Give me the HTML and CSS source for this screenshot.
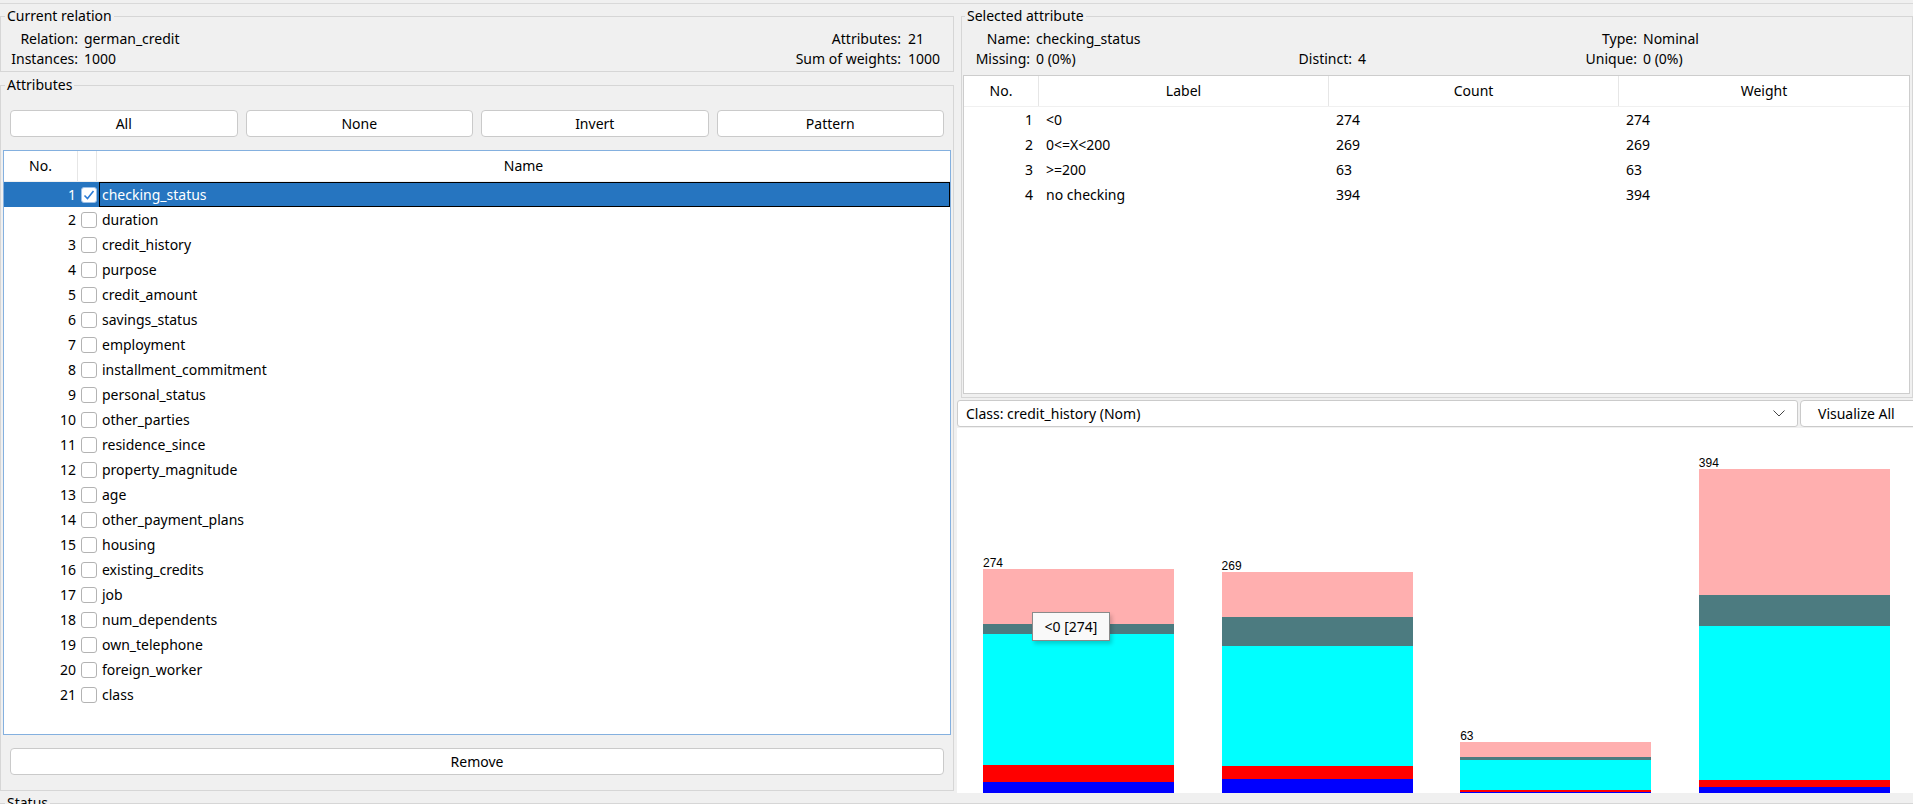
FILE: index.html
```html
<!DOCTYPE html>
<html>
<head>
<meta charset="utf-8">
<title>Weka Preprocess</title>
<link rel="stylesheet" href="styles.css">
</head>
<body>
<div class="app">
  <div class="tabpane">
    <div class="left">
      <fieldset class="group rel">
        <legend>Current relation</legend>
        <div class="relrow">
          <div class="kv kv-left">
            <span class="k">Relation:</span><span class="v">german_credit</span>
            <span class="k">Instances:</span><span class="v">1000</span>
          </div>
          <div class="kv kv-right">
            <span class="k">Attributes:</span><span class="v">21</span>
            <span class="k">Sum of weights:</span><span class="v">1000</span>
          </div>
        </div>
      </fieldset>

      <fieldset class="group attrs">
        <legend>Attributes</legend>
        <div class="btnrow">
          <button class="btn">All</button>
          <button class="btn">None</button>
          <button class="btn">Invert</button>
          <button class="btn">Pattern</button>
        </div>
        <div class="attrtable">
          <div class="ahead">
            <div class="ah">No.</div>
            <div class="ah"></div>
            <div class="ah last">Name</div>
          </div>
          <div class="arow sel">
            <div class="ano">1</div>
            <div class="acb"><span class="chk on"><svg width="14" height="14" viewBox="0 0 14 14"><polyline points="2.5,7.5 5.5,10.5 11.5,3" fill="none" stroke="#2b7bd6" stroke-width="1.6"/></svg></span></div>
            <div class="aname">checking_status</div>
          </div>
          <div class="arow"><div class="ano">2</div><div class="acb"><span class="chk"></span></div><div class="aname">duration</div></div>
          <div class="arow"><div class="ano">3</div><div class="acb"><span class="chk"></span></div><div class="aname">credit_history</div></div>
          <div class="arow"><div class="ano">4</div><div class="acb"><span class="chk"></span></div><div class="aname">purpose</div></div>
          <div class="arow"><div class="ano">5</div><div class="acb"><span class="chk"></span></div><div class="aname">credit_amount</div></div>
          <div class="arow"><div class="ano">6</div><div class="acb"><span class="chk"></span></div><div class="aname">savings_status</div></div>
          <div class="arow"><div class="ano">7</div><div class="acb"><span class="chk"></span></div><div class="aname">employment</div></div>
          <div class="arow"><div class="ano">8</div><div class="acb"><span class="chk"></span></div><div class="aname">installment_commitment</div></div>
          <div class="arow"><div class="ano">9</div><div class="acb"><span class="chk"></span></div><div class="aname">personal_status</div></div>
          <div class="arow"><div class="ano">10</div><div class="acb"><span class="chk"></span></div><div class="aname">other_parties</div></div>
          <div class="arow"><div class="ano">11</div><div class="acb"><span class="chk"></span></div><div class="aname">residence_since</div></div>
          <div class="arow"><div class="ano">12</div><div class="acb"><span class="chk"></span></div><div class="aname">property_magnitude</div></div>
          <div class="arow"><div class="ano">13</div><div class="acb"><span class="chk"></span></div><div class="aname">age</div></div>
          <div class="arow"><div class="ano">14</div><div class="acb"><span class="chk"></span></div><div class="aname">other_payment_plans</div></div>
          <div class="arow"><div class="ano">15</div><div class="acb"><span class="chk"></span></div><div class="aname">housing</div></div>
          <div class="arow"><div class="ano">16</div><div class="acb"><span class="chk"></span></div><div class="aname">existing_credits</div></div>
          <div class="arow"><div class="ano">17</div><div class="acb"><span class="chk"></span></div><div class="aname">job</div></div>
          <div class="arow"><div class="ano">18</div><div class="acb"><span class="chk"></span></div><div class="aname">num_dependents</div></div>
          <div class="arow"><div class="ano">19</div><div class="acb"><span class="chk"></span></div><div class="aname">own_telephone</div></div>
          <div class="arow"><div class="ano">20</div><div class="acb"><span class="chk"></span></div><div class="aname">foreign_worker</div></div>
          <div class="arow"><div class="ano">21</div><div class="acb"><span class="chk"></span></div><div class="aname">class</div></div>
        </div>
        <button class="btn remove">Remove</button>
      </fieldset>
    </div>

    <div class="right">
      <fieldset class="group selattr">
        <legend>Selected attribute</legend>
        <div class="info">
          <span class="k">Name:</span><span class="v">checking_status</span>
          <span class="k"></span><span class="v"></span>
          <span class="k">Type:</span><span class="v">Nominal</span>
          <span class="k">Missing:</span><span class="v">0 (0%)</span>
          <span class="k">Distinct:</span><span class="v">4</span>
          <span class="k">Unique:</span><span class="v">0 (0%)</span>
        </div>
        <div class="vtable">
          <div class="vhead">
            <div class="vh">No.</div>
            <div class="vh">Label</div>
            <div class="vh">Count</div>
            <div class="vh last">Weight</div>
          </div>
          <div class="vrow"><div class="vno">1</div><div class="vc">&lt;0</div><div class="vc">274</div><div class="vc">274</div></div>
          <div class="vrow"><div class="vno">2</div><div class="vc">0&lt;=X&lt;200</div><div class="vc">269</div><div class="vc">269</div></div>
          <div class="vrow"><div class="vno">3</div><div class="vc">&gt;=200</div><div class="vc">63</div><div class="vc">63</div></div>
          <div class="vrow"><div class="vno">4</div><div class="vc">no checking</div><div class="vc">394</div><div class="vc">394</div></div>
        </div>
      </fieldset>

      <div class="classrow">
        <div class="combo">
          <span>Class: credit_history (Nom)</span>
          <svg class="chev" width="12" height="7" viewBox="0 0 12 7"><polyline points="0.5,0.5 6,6 11.5,0.5" fill="none" stroke="#444" stroke-width="1"/></svg>
        </div>
        <button class="btn visall">Visualize All</button>
      </div>

      <div class="chart">
        <div class="bar">
          <div class="blabel">274</div>
          <div class="seg pink" style="height:55px"></div>
          <div class="seg teal" style="height:10px"></div>
          <div class="seg cyan" style="height:131px"></div>
          <div class="seg red" style="height:17px"></div>
          <div class="seg blue" style="height:11px"></div>
        </div>
        <div class="bar">
          <div class="blabel">269</div>
          <div class="seg pink" style="height:45px"></div>
          <div class="seg teal" style="height:29px"></div>
          <div class="seg cyan" style="height:120px"></div>
          <div class="seg red" style="height:13px"></div>
          <div class="seg blue" style="height:14px"></div>
        </div>
        <div class="bar">
          <div class="blabel">63</div>
          <div class="seg pink" style="height:15px"></div>
          <div class="seg teal" style="height:3px"></div>
          <div class="seg cyan" style="height:30px"></div>
          <div class="seg red" style="height:2px"></div>
          <div class="seg blue" style="height:1px"></div>
        </div>
        <div class="bar">
          <div class="blabel">394</div>
          <div class="seg pink" style="height:126px"></div>
          <div class="seg teal" style="height:31px"></div>
          <div class="seg cyan" style="height:154px"></div>
          <div class="seg red" style="height:7px"></div>
          <div class="seg blue" style="height:6px"></div>
        </div>
        <div class="tooltip">&lt;0 [274]</div>
      </div>
    </div>
  </div>

  <fieldset class="group status">
    <legend>Status</legend>
  </fieldset>
</div>
</body>
</html>
```

FILE: styles.css
```css
* { box-sizing: border-box; }
html, body { margin: 0; padding: 0; }
body {
  width: 1913px;
  height: 804px;
  overflow: hidden;
  background: #f0f0f0;
  font-family: "Noto Sans", "Open Sans", sans-serif;
  font-size: 14px;
  line-height: 20px;
  color: #000;
}
.app { padding-top: 3px; }

.tabpane {
  border-top: 1px solid #d9d9d9;
  padding-top: 2px;
  height: 790px;
  display: grid;
  grid-template-columns: 954px 956px;
  column-gap: 3px;
}

.group {
  margin: 0;
  padding: 0;
  border: 1px solid #d6d6d6;
  min-width: 0;
}
.group legend {
  margin-left: 4px;
  padding: 0 2px;
  line-height: 20px;
}

/* Current relation */
.rel { padding: 3px 13px 2px 8px; }
.rel legend { margin-left: -4px; }
.relrow { display: flex; justify-content: space-between; }
.kv { display: grid; column-gap: 6px; }
.kv-left { grid-template-columns: 69px auto; }
.kv-right { grid-template-columns: auto auto; column-gap: 7px; }
.kv .k { text-align: right; }

/* Attributes */
.attrs { margin-top: 3px; padding: 0 2px 15px 2px; }
.attrs legend { margin-left: 2px; }
.btnrow {
  margin: 15px 7px 0;
  display: grid;
  grid-template-columns: repeat(4, 1fr);
  column-gap: 8px;
}
.btn {
  height: 27px;
  background: #fff;
  border: 1px solid #cacaca;
  border-radius: 4px;
  font: inherit;
  color: #000;
  padding: 0;
}
.attrtable {
  margin-top: 13px;
  height: 585px;
  border: 1px solid #84b0df;
  background: #fff;
}
.ahead, .arow {
  display: grid;
  grid-template-columns: 74px 19px 1fr;
}
.ahead { height: 31px; border-bottom: 1px solid #f0f0f0; }
.ah {
  border-right: 1px solid #e6e6e6;
  text-align: center;
  line-height: 30px;
}
.ah.last { border-right: none; }
.arow { height: 25px; line-height: 25px; }
.ano { text-align: right; padding-right: 2px; }
.acb { display: flex; align-items: center; }
.chk {
  width: 16px;
  height: 16px;
  margin-left: 3px;
  border: 1px solid #b3b3b3;
  border-radius: 3px;
  background: #fff;
  display: flex;
  align-items: center;
  justify-content: center;
}
.chk.on { border-color: #9cc0e8; }
.aname {
  margin-left: 2px;
  padding-left: 2px;
  border: 1px solid transparent;
  line-height: 23px;
}
.arow.sel { background: #2675c0; color: #fff; }
.arow.sel .aname { border-color: #000; }
.remove { display: block; width: calc(100% - 14px); margin: 13px 7px 0; }

/* Selected attribute */
.right { min-width: 0; }
.selattr { margin-left: 4px; padding: 0 2px 3px 1px; }
.selattr legend { margin-left: 2px; }
.info {
  padding-top: 3px;
  display: grid;
  grid-template-columns: 67px 260px 62px 208px 77px 1fr;
}
.info .k { text-align: right; }
.info .v { padding-left: 6px; }
.vtable {
  margin-top: 6px;
  height: 319px;
  border: 1px solid #cdcdcd;
  background: #fff;
}
.vhead, .vrow {
  display: grid;
  grid-template-columns: 75px 290px 290px 1fr;
}
.vhead { height: 31px; border-bottom: 1px solid #f0f0f0; }
.vh {
  border-right: 1px solid #e6e6e6;
  text-align: center;
  line-height: 30px;
}
.vh.last { border-right: none; }
.vrow { height: 25px; line-height: 25px; }
.vno { text-align: right; padding-right: 6px; }
.vc { padding-left: 7px; }

/* class row */
.classrow {
  margin-top: 2px;
  display: flex;
  height: 27px;
  width: 980px;
}
.combo {
  width: 841px;
  height: 27px;
  background: #fff;
  border: 1px solid #cbcbcb;
  border-radius: 3px;
  padding: 0 12px 0 8px;
  display: flex;
  align-items: center;
  justify-content: space-between;
  line-height: 25px;
}
.chev { display: block; }
.visall {
  margin-left: 2px;
  width: 130px;
  text-align: left;
  padding-left: 17px;
  border-radius: 4px 0 0 4px;
}

/* chart */
.chart {
  position: relative;
  margin-top: 1px;
  height: 365px;
  background: #fff;
  display: flex;
  align-items: flex-end;
  padding-left: 26px;
  column-gap: 47.6px;
}
.bar { width: 191px; display: flex; flex-direction: column; }
.blabel {
  font-family: "Liberation Sans", Arial, sans-serif;
  font-size: 12px;
  line-height: 11px;
  height: 11px;
  color: #000;
}
.seg { width: 100%; }
.pink { background: #ffafaf; }
.teal { background: #4c7b80; }
.cyan { background: #00ffff; }
.red { background: #ff0000; }
.blue { background: #0000ff; }
.tooltip {
  position: absolute;
  left: 75px;
  top: 184px;
  width: 78px;
  height: 29px;
  background: #f9f9f9;
  border: 1px solid #8a8a8a;
  box-shadow: 2px 3px 4px rgba(0, 0, 0, 0.18);
  text-align: center;
  line-height: 27px;
  font-size: 14px;
}

/* status */
.status { height: 60px; }
```
